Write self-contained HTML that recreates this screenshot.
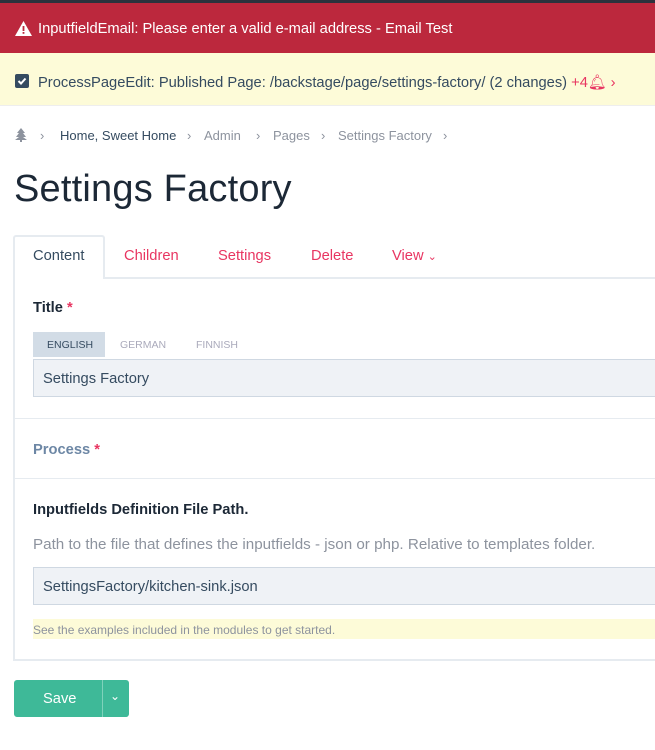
<!DOCTYPE html>
<html><head><meta charset="utf-8"><style>
*{box-sizing:border-box;margin:0;padding:0}
body{width:655px;height:750px;overflow:hidden;background:#fff;font-family:"Liberation Sans",sans-serif;color:#354b60;position:relative}
.abs{position:absolute;white-space:nowrap}
</style></head><body>
<div class="abs" style="left:0;top:0;width:655px;height:3px;background:#2c323d"></div>
<div class="abs" style="left:0;top:3px;width:655px;height:50px;background:#bc283d"></div>
<svg class="abs" style="left:15px;top:21px" width="17" height="15" viewBox="0 0 17 15"><path d="M8.5 0L17 15H0Z" fill="#fff"/><rect x="7.6" y="5" width="1.8" height="5" fill="#bc283d"/><rect x="7.6" y="11" width="1.8" height="1.8" fill="#bc283d"/></svg>
<div class="abs" style="left:38px;top:21px;font-size:14.7px;color:#fff">InputfieldEmail: Please enter a valid e-mail address - Email Test</div>
<div class="abs" style="left:0;top:53px;width:655px;height:53px;background:#fdfbd8;border-bottom:1px solid #eee"></div>
<div class="abs" style="left:15px;top:74px;width:14px;height:14px;background:#354b60;border-radius:2px"></div>
<svg class="abs" style="left:15px;top:74px" width="14" height="14"><path d="M3.5 7l2.5 2.5 4.5-5" stroke="#fff" stroke-width="2" fill="none"/></svg>
<div class="abs" style="left:38px;top:73px;font-size:14.7px;color:#354b60">ProcessPageEdit: Published Page: /backstage/page/settings-factory/ (2 changes) <span style="color:#e83561">+4</span><span style="color:#e83561">&#x1F514;&#xFE0E;</span> <span style="color:#e83561">›</span></div>
<svg class="abs" style="left:15px;top:128px" width="12" height="14"><path d="M6 0L2 5h2L1 9h3L0 12h5v2h2v-2h5L8 9h3L8 5h2Z" fill="#8d939e"/></svg>
<div class="abs" style="left:40px;top:128px;font-size:13px;color:#8d939e">›</div>
<div class="abs" style="left:60px;top:128px;font-size:13px;color:#354b60">Home, Sweet Home</div>
<div class="abs" style="left:187px;top:128px;font-size:13px;color:#8d939e">›</div>
<div class="abs" style="left:204px;top:128px;font-size:13px;color:#8d939e">Admin</div>
<div class="abs" style="left:256px;top:128px;font-size:13px;color:#8d939e">›</div>
<div class="abs" style="left:273px;top:128px;font-size:13px;color:#8d939e">Pages</div>
<div class="abs" style="left:321px;top:128px;font-size:13px;color:#8d939e">›</div>
<div class="abs" style="left:338px;top:128px;font-size:13px;color:#8d939e">Settings Factory</div>
<div class="abs" style="left:443px;top:128px;font-size:13px;color:#8d939e">›</div>
<div class="abs" style="left:14px;top:168px;font-size:38px;color:#1c2836;letter-spacing:0.2px">Settings Factory</div>
<div class="abs" style="left:13px;top:277px;width:660px;height:384px;border:2px solid #e6ebf0;border-right:none"></div>
<div class="abs" style="left:13px;top:235px;width:92px;height:44px;border:2px solid #e6ebf0;border-bottom:none;background:#fff;border-radius:3px 3px 0 0"></div>
<div class="abs" style="left:33px;top:248px;font-size:14.7px;color:#354b60">Content</div>
<div class="abs" style="left:124px;top:248px;font-size:14.7px;color:#e83561">Children</div>
<div class="abs" style="left:218px;top:248px;font-size:14.7px;color:#e83561">Settings</div>
<div class="abs" style="left:311px;top:248px;font-size:14.7px;color:#e83561">Delete</div>
<div class="abs" style="left:392px;top:248px;font-size:14.7px;color:#e83561">View <span style="font-size:11px">&#8964;</span></div>
<div class="abs" style="left:33px;top:300px;font-size:14.7px;font-weight:bold;color:#1c2836">Title <span style="color:#e83561">*</span></div>
<div class="abs" style="left:33px;top:332px;width:72px;height:25px;background:#d2dce6"></div>
<div class="abs" style="left:47px;top:339px;font-size:10.5px;color:#354b60">ENGLISH</div>
<div class="abs" style="left:120px;top:339px;font-size:10.5px;color:#aab">GERMAN</div>
<div class="abs" style="left:196px;top:339px;font-size:10.5px;color:#aab">FINNISH</div>
<div class="abs" style="left:33px;top:359px;width:640px;height:38px;background:#eff2f6;border:1px solid #cfd8e2"></div>
<div class="abs" style="left:43px;top:371px;font-size:14.7px;color:#354b60">Settings Factory</div>
<div class="abs" style="left:15px;top:418px;width:655px;height:1px;background:#e6ebf0"></div>
<div class="abs" style="left:33px;top:442px;font-size:14.7px;font-weight:bold;color:#6d87a5">Process <span style="color:#e83561">*</span></div>
<div class="abs" style="left:15px;top:478px;width:655px;height:1px;background:#e6ebf0"></div>
<div class="abs" style="left:33px;top:502px;font-size:14.7px;font-weight:bold;color:#1c2836">Inputfields Definition File Path.</div>
<div class="abs" style="left:33px;top:536px;font-size:15.2px;color:#8d939e">Path to the file that defines the inputfields - json or php. Relative to templates folder.</div>
<div class="abs" style="left:33px;top:567px;width:640px;height:38px;background:#eff2f6;border:1px solid #cfd8e2"></div>
<div class="abs" style="left:43px;top:579px;font-size:14.7px;color:#354b60">SettingsFactory/kitchen-sink.json</div>
<div class="abs" style="left:33px;top:619px;width:640px;height:20px;background:#fdfbd8"></div>
<div class="abs" style="left:33px;top:623px;font-size:12px;color:#8d939e">See the examples included in the modules to get started.</div>
<div class="abs" style="left:14px;top:680px;width:115px;height:37px;background:#3eb998;border-radius:3px"></div>
<div class="abs" style="left:102px;top:680px;width:1px;height:37px;background:#7fd2bb"></div>
<div class="abs" style="left:43px;top:691px;font-size:14.7px;color:#fff">Save</div>
<div class="abs" style="left:110px;top:689px;font-size:12px;color:#fff">&#8964;</div>
</body></html>
